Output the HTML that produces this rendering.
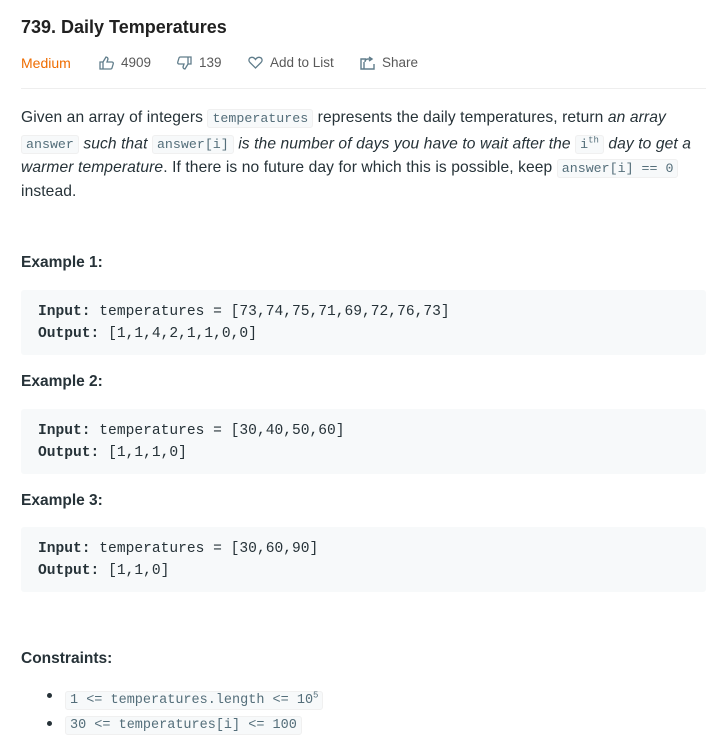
<!DOCTYPE html>
<html><head><meta charset="utf-8"><style>
*{margin:0;padding:0;box-sizing:border-box}
body{width:718px;height:747px;background:#fff;font-family:"Liberation Sans",sans-serif;color:#262626;position:relative;overflow:hidden}
h1{position:absolute;left:21px;top:17px;font-size:18px;font-weight:bold;color:#212121}
.meta{position:absolute;left:21px;top:55px;font-size:13.5px;color:#595959;height:16px;width:700px}
.meta>*{position:absolute;top:0;display:flex;align-items:center;white-space:nowrap}
.meta .m{color:#ef6c00;font-size:14px}
.meta svg{margin-right:7px}
hr{position:absolute;left:21px;top:88px;width:685px;border:0;border-top:1px solid #eee}
.p{position:absolute;left:21px;top:106px;width:700px;font-size:15.6px;line-height:23px;color:#263238;white-space:nowrap;letter-spacing:0.1px}
code{font-family:"Liberation Mono",monospace;font-size:13.3px;background:#f7f9fa;border:1px solid #f0f0f0;border-radius:3px;padding:1px 4px;color:#546e7a;letter-spacing:0}
sup{font-size:9px}
.h{position:absolute;left:21px;font-size:15.5px;font-weight:bold;color:#263238}
.pre{position:absolute;left:21px;width:685px;height:65px;background:#f7f9fa;border-radius:3px;padding:11px 17px;font-family:"Liberation Mono",monospace;font-size:14.6px;line-height:22px;color:#263238;white-space:pre}
ul{position:absolute;left:47px;top:684px;list-style:none;font-size:14px;line-height:23px}
ul li{position:relative}
ul li:before{content:"";position:absolute;left:0;top:9px;width:5px;height:5px;border-radius:50%;background:#263238}
ul li code{margin-left:18px;font-size:13.5px}
</style></head><body>
<h1>739. Daily Temperatures</h1>
<div class="meta"><span class="m" style="left:0">Medium</span>
<span style="left:78px"><svg width="15" height="14" viewBox="0 0 15 14" fill="none" stroke="#607d8b" stroke-width="1.3"><path d="M1 6h3v7H1zM4 6l3-5c1 0 2 1 2 2l-1 3h5c1 0 1.5 1 1.2 2l-1.2 4c-.2.7-.8 1-1.5 1H4"/></svg>4909</span>
<span style="left:156px"><svg width="15" height="14" viewBox="0 0 15 14" fill="none" stroke="#607d8b" stroke-width="1.3"><path d="M14 8h-3V1h3zM11 8l-3 5c-1 0-2-1-2-2l1-3H2C1 8 .5 7 .8 6L2 2c.2-.7.8-1 1.5-1H11"/></svg>139</span>
<span style="left:227px"><svg width="15" height="13" viewBox="0 0 15 13" fill="none" stroke="#607d8b" stroke-width="1.3"><path d="M7.5 12L2 6.5C0 4.5 1 1.5 3.8 1.3 5.5 1.2 6.7 2.3 7.5 3.5 8.3 2.3 9.5 1.2 11.2 1.3 14 1.5 15 4.5 13 6.5z"/></svg>Add to List</span>
<span style="left:339px"><svg width="15" height="14" viewBox="0 0 15 14" fill="none" stroke="#607d8b" stroke-width="1.4"><path d="M6 3H1v10h13V8M4 13V6M9 1l3 2-3 2M12 3H8c-2 0-3 1-3 3"/></svg>Share</span></div>
<hr>
<div class="p">Given an array of integers <code>temperatures</code> represents the daily temperatures, return <i>an array</i><br><code>answer</code> <i>such that</i> <code>answer[i]</code> <i>is the number of days you have to wait after the</i> <code>i<sup>th</sup></code> <i>day to get a</i><br><i>warmer temperature</i>. If there is no future day for which this is possible, keep <code>answer[i] == 0</code><br>instead.</div>
<div class="h" style="top:254px">Example 1:</div>
<div class="pre" style="top:290px"><b>Input:</b> temperatures = [73,74,75,71,69,72,76,73]
<b>Output:</b> [1,1,4,2,1,1,0,0]</div>
<div class="h" style="top:373px">Example 2:</div>
<div class="pre" style="top:409px"><b>Input:</b> temperatures = [30,40,50,60]
<b>Output:</b> [1,1,1,0]</div>
<div class="h" style="top:492px">Example 3:</div>
<div class="pre" style="top:527px"><b>Input:</b> temperatures = [30,60,90]
<b>Output:</b> [1,1,0]</div>
<div class="h" style="top:650px">Constraints:</div>
<ul><li><code>1 &lt;= temperatures.length &lt;= 10<sup>5</sup></code></li>
<li><code>30 &lt;= temperatures[i] &lt;= 100</code></li></ul>
</body></html>
